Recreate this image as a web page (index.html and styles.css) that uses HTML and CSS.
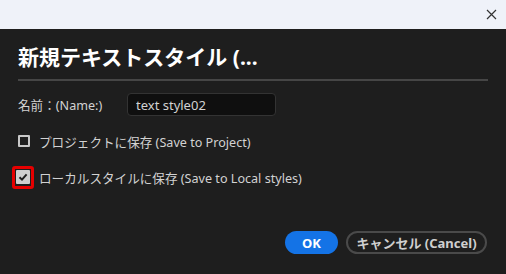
FILE: index.html
```html
<!DOCTYPE html>
<html lang="ja">
<head>
  <meta charset="UTF-8">
  <title>新規テキストスタイル</title>
  <link rel="stylesheet" href="styles.css">
</head>
<body>

  <!-- Title bar -->
  <div class="titlebar">
    <svg class="close" width="11" height="11" viewBox="0 0 11 11">
      <path d="M1 1 L10 10 M10 1 L1 10" stroke="#333" stroke-width="1.2" fill="none"/>
    </svg>
  </div>

  <!-- Dialog -->
  <div class="dialog">
    <h2 class="title">新規テキストスタイル (...</h2>

    <div class="row name-row">
      <span class="label">名前：(Name:)</span>
      <input type="text" class="name-input" value="text style02">
    </div>

    <div class="row check-row">
      <span class="checkbox"></span>
      <span>プロジェクトに保存 (Save to Project)</span>
    </div>

    <div class="row check-row">
      <span class="highlight">
        <span class="checkbox checked">
          <svg width="10" height="10" viewBox="0 0 10 10">
            <path d="M1.5 5.2 L4 7.6 L8.6 2.4" stroke="#1e1e1e" stroke-width="2" fill="none"/>
          </svg>
        </span>
      </span>
      <span>ローカルスタイルに保存 (Save to Local styles)</span>
    </div>

    <div class="buttons">
      <button class="btn ok">OK</button>
      <button class="btn cancel">キャンセル (Cancel)</button>
    </div>
  </div>

</body>
</html>
```

FILE: styles.css
```css
body, html {
  margin: 0;
  padding: 0;
  width: 100%;
  height: 100%;
  overflow: hidden;
  font-family: "Noto Sans", "Noto Sans CJK JP", sans-serif;
  background-color: #1e1e1e;
  color: #d2d2d2;
}
.titlebar {
  height: 29px;
  background-color: #eff2f9;
  display: flex;
  justify-content: flex-end;
  align-items: center;
  padding-right: 9px;
}
.dialog {
  display: flex;
  flex-direction: column;
  padding: 16px 18px 0 18px;
}
.title {
  margin: 0;
  font-size: 21px;
  line-height: 25px;
  font-weight: bold;
  color: #ffffff;
  padding-bottom: 9px;
  border-bottom: 2px solid #464646;
}
.row {
  display: flex;
  align-items: center;
  font-size: 12.6px;
}
.name-row {
  margin-top: 12px;
  height: 23px;
}
.label {
  width: 109px;
}
.name-input {
  width: 149px;
  height: 23px;
  box-sizing: border-box;
  padding: 0 8px;
  background: #0f0f0f;
  border: 1px solid #333;
  border-radius: 4px;
  color: #d2d2d2;
  font-family: inherit;
  font-size: 13px;
}
.check-row {
  height: 24px;
  gap: 9px;
  margin-top: 13px;
}
.check-row + .check-row {
  margin-top: 12px;
}
.checkbox {
  width: 12px;
  height: 12px;
  box-sizing: border-box;
  border: 2px solid #c8c8c8;
  border-radius: 1px;
  display: flex;
  align-items: center;
  justify-content: center;
}
.checked {
  width: 14px;
  height: 14px;
  background: #cfcfcf;
  border: none;
}
.highlight {
  margin-left: -6px;
  margin-right: -4px;
  width: 22px;
  height: 23px;
  box-sizing: border-box;
  border: 3px solid #e60000;
  border-radius: 3px;
  display: flex;
  align-items: center;
  justify-content: center;
}
.buttons {
  display: flex;
  justify-content: flex-end;
  gap: 8px;
  margin-top: 42px;
  padding-right: 1px;
}
.btn {
  height: 23px;
  border-radius: 12px;
  font-family: inherit;
  font-size: 13px;
  font-weight: bold;
  padding: 0;
  cursor: pointer;
}
.ok {
  width: 53px;
  background-color: #1473e6;
  border: none;
  color: #ffffff;
}
.cancel {
  width: 141px;
  background-color: #1e1e1e;
  border: 2px solid #4a4a4a;
  color: #cfcfcf;
}
```
